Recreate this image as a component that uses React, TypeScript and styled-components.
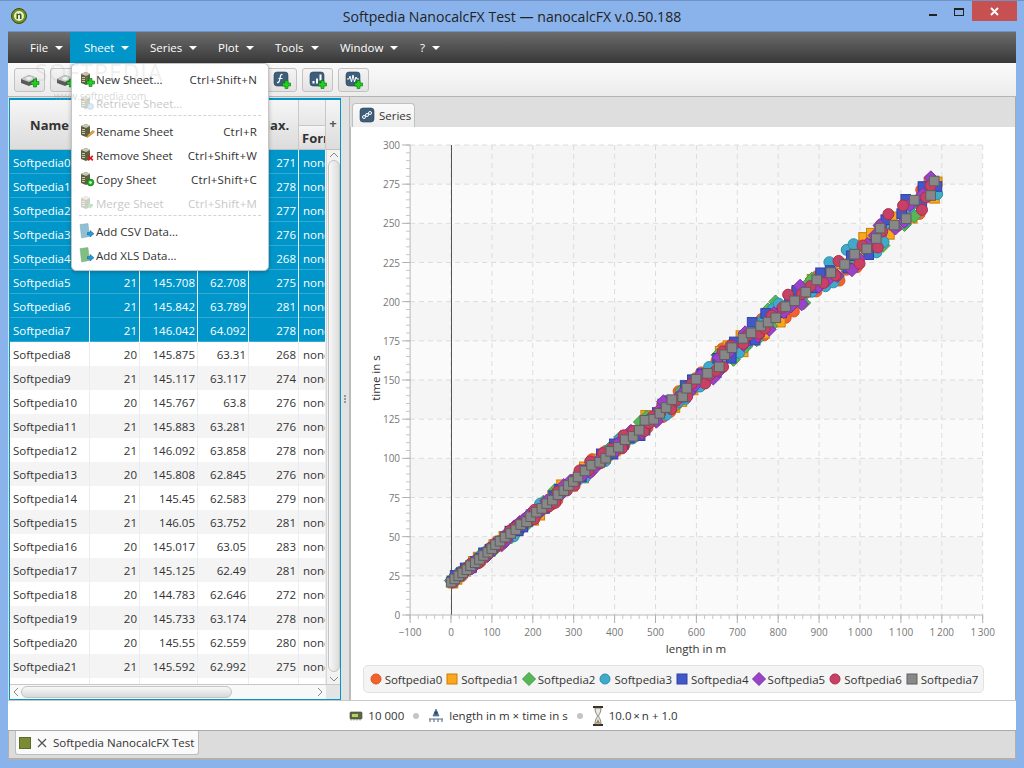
import React from 'react';
import styled, { createGlobalStyle } from 'styled-components';

const GlobalStyle = createGlobalStyle`
  html, body { margin: 0; padding: 0; background: #8ab3ec; }
  body { font-family: "Open Sans", "Liberation Sans", sans-serif; font-size: 11.5px; color: #333; }
  * { box-sizing: border-box; }
`;

const Win = styled.div`
  position: relative;
  width: 1024px;
  height: 768px;
  overflow: hidden;
  display: flex;
  flex-direction: column;
  background: #8ab3ec;
  border-top: 1px solid #6f93c7;
`;

const TitleBar = styled.div`
  position: relative;
  height: 30px;
  flex: none;
  display: flex;
  align-items: center;
  justify-content: center;
  font-size: 14.1px;
  color: #222;
`;

const AppLogo = styled.svg`
  position: absolute;
  left: 11px;
  top: 7px;
`;

const WinButtons = styled.div`
  position: absolute;
  right: 7px;
  top: 0;
  display: flex;
  align-items: flex-start;
`;

const MinBtn = styled.div`
  width: 8px;
  height: 2px;
  background: #222;
  margin: 13px 17px 0 0;
`;

const MaxBtn = styled.div`
  width: 10px;
  height: 8px;
  border: 1px solid #222;
  border-top-width: 2px;
  margin: 7px 8px 0 0;
`;

const CloseBtn = styled.div`
  width: 45px;
  height: 20px;
  background: #c75050;
  color: #fff;
  display: flex;
  align-items: center;
  justify-content: center;
`;

const Frame = styled.div`
  flex: 1;
  margin: 0 8px;
  display: flex;
  flex-direction: column;
  min-height: 0;
`;

const MenuBar = styled.div`
  height: 32px;
  flex: none;
  display: flex;
  background: linear-gradient(#6c6c6c, #383838);
  border-top: 1px solid #6f93c7;
  padding-left: 8px;
`;

const MenuHead = styled.div<{ $w: number; $active?: boolean }>`
  width: ${p => p.$w}px;
  display: flex;
  align-items: center;
  padding-left: 14px;
  gap: 7px;
  font-size: 11.5px;
  color: #fff;
  background: ${p => (p.$active ? '#0096c9' : 'transparent')};
`;

const Caret = styled.span`
  width: 0;
  height: 0;
  border-left: 4px solid transparent;
  border-right: 4px solid transparent;
  border-top: 4px solid #fff;
`;

const ToolBar = styled.div`
  height: 34px;
  flex: none;
  display: flex;
  gap: 5px;
  padding: 5px 0 0 6px;
  background: linear-gradient(#fafafa, #ececec);
  border-bottom: 1px solid #b4b4b4;
`;

const ToolBtn = styled.div`
  width: 31px;
  height: 24px;
  border: 1px solid #c2c2c2;
  border-radius: 3px;
  background: linear-gradient(#f4f4f4, #e2e2e2);
  display: flex;
  align-items: center;
  justify-content: center;
`;

const Main = styled.div`
  flex: 1;
  min-height: 0;
  display: flex;
  background: #dedede;
`;

const TablePane = styled.div`
  width: 332px;
  flex: none;
  margin: 1px 0 0 1px;
  border: 1px solid #0096c9;
  border-top-width: 2px;
  background: #fff;
  display: flex;
  flex-direction: column;
  height: 602px;
  overflow: hidden;
`;

const COLS = '80px 50px 58px 51px 50px 27px 14px';

const HeadRow = styled.div`
  height: 50px;
  flex: none;
  display: grid;
  grid-template-columns: ${COLS};
`;

const HeadCell = styled.div`
  display: flex;
  align-items: center;
  justify-content: center;
  font-weight: 700;
  font-size: 13px;
  color: #333;
  background: linear-gradient(#f6f6f6, #dcdcdc);
  border-right: 1px solid #c8c8c8;
  border-bottom: 1px solid #c0c0c0;
  overflow: hidden;
  white-space: nowrap;
`;

const GroupCell = styled.div`
  display: flex;
  flex-direction: column;
  overflow: hidden;
  border-right: 1px solid #c8c8c8;
  border-bottom: 1px solid #c0c0c0;
`;

const GroupTop = styled.div`
  height: 26px;
  background: linear-gradient(#f4f4f4, #e6e6e6);
  border-bottom: 1px solid #c8c8c8;
`;

const GroupSub = styled.div`
  flex: 1;
  padding-left: 3px;
  display: flex;
  align-items: center;
  font-weight: 700;
  font-size: 13px;
  white-space: nowrap;
  background: linear-gradient(#f6f6f6, #dcdcdc);
`;

const PlusCell = styled(HeadCell)`
  border-right: 0;
  font-size: 13px;
  color: #555;
  padding-bottom: 3px;
`;

const TableMid = styled.div`
  flex: 1;
  min-height: 0;
  display: flex;
`;

const Rows = styled.div`
  width: 316px;
  flex: none;
  overflow: hidden;
`;

const Row = styled.div<{ $selected?: boolean; $alt?: boolean }>`
  height: 24px;
  display: grid;
  grid-template-columns: 80px 50px 58px 51px 50px 27px;
  background: ${p => (p.$selected ? '#0096c9' : p.$alt ? '#f4f4f4' : '#fff')};
  color: ${p => (p.$selected ? '#fff' : '#333')};
  box-shadow: ${p => (p.$selected ? 'inset 0 -1px 0 #33abd4' : 'none')};
`;

const Cell = styled.div<{ $right?: boolean; $selected?: boolean; $clip?: boolean }>`
  display: flex;
  align-items: center;
  justify-content: ${p => (p.$right ? 'flex-end' : 'flex-start')};
  padding: ${p => (p.$clip ? '0 0 0 4px' : '0 2px 0 3px')};
  white-space: nowrap;
  overflow: hidden;
  border-right: 1px solid ${p => (p.$selected ? '#f0f8fb' : '#ececec')};
`;

const VBar = styled.div`
  width: 14px;
  flex: none;
  position: relative;
  display: flex;
  flex-direction: column;
  align-items: center;
  background: #f2f2f2;
  border-left: 1px solid #d8d8d8;
`;

const VThumb = styled.div`
  position: absolute;
  left: 1px;
  right: 0;
  top: 10px;
  height: 512px;
  border-radius: 7px;
  border: 1px solid #c4c4c4;
  background: linear-gradient(90deg, #f8f8f8, #dcdcdc);
`;

const BarArrow = styled.svg<{ $bottom?: boolean }>`
  position: absolute;
  ${p => (p.$bottom ? 'bottom: 2px;' : 'top: 2px;')}
`;

const HBarRow = styled.div`
  height: 15px;
  flex: none;
  display: flex;
  border-top: 1px solid #c8c8c8;
`;

const HBar = styled.div`
  position: relative;
  flex: 1;
  display: flex;
  align-items: center;
  justify-content: space-between;
  padding: 0 3px;
  background: #f8f8f8;
`;

const HThumb = styled.div`
  position: absolute;
  left: 11px;
  width: 211px;
  top: 1px;
  bottom: 1px;
  border-radius: 6px;
  border: 1px solid #c4c4c4;
  background: linear-gradient(#f8f8f8, #d8d8d8);
`;

const Corner = styled.div`
  width: 14px;
  background: #e4e4e4;
`;

const Splitter = styled.div`
  width: 9px;
  flex: none;
  background: #e2e2e2;
  border-right: 1px solid #bbb;
  display: flex;
  flex-direction: column;
  align-items: center;
  justify-content: center;
  gap: 1px;
`;

const GripDot = styled.span`
  width: 2px;
  height: 2px;
  background: #999;
`;

const RightPane = styled.div`
  flex: 1;
  min-width: 0;
  display: flex;
  flex-direction: column;
  border-right: 1px solid #aaa;
`;

const TabStrip = styled.div`
  height: 30px;
  flex: none;
  padding: 6px 0 0 2px;
  background: #dedede;
`;

const SeriesTab = styled.div`
  width: 63px;
  height: 24px;
  display: flex;
  align-items: center;
  gap: 2px;
  padding-left: 6px;
  background: linear-gradient(#fafafa, #eeeeee);
  border: 1px solid #c0c0c0;
  border-bottom: 0;
  border-radius: 4px 4px 0 0;
`;

const ChartPanel = styled.div`
  flex: 1;
  min-height: 0;
  background: #fff;
  display: flex;
  flex-direction: column;
  border-left: 1px solid #bbb;
`;

const ChartSvg = styled.svg`
  display: block;
  flex: none;
`;

const Legend = styled.div`
  margin: 4px 31px 0 12px;
  height: 28px;
  display: flex;
  align-items: center;
  justify-content: center;
  gap: 3px;
  background: #f4f4f4;
  border: 1px solid #e2e2e2;
  border-radius: 5px;
`;

const LegendItem = styled.div`
  display: flex;
  align-items: center;
  gap: 2px;
  color: #333;
`;

const StatusBar = styled.div`
  height: 31px;
  flex: none;
  display: flex;
  align-items: center;
  justify-content: center;
  gap: 5px;
  background: #fff;
  border-top: 1px solid #c8c8c8;
  border-bottom: 1px solid #aaa;
  padding-left: 3px;
  color: #333;
`;

const StatusDot = styled.span`
  width: 6px;
  height: 6px;
  border-radius: 50%;
  background: #c4c4c4;
  margin: 0 4px;
`;

const DocBar = styled.div`
  height: 29px;
  flex: none;
  padding-left: 6px;
  background: #dcdcdc;
  border-bottom: 2px solid #b0b0b0;
  border-left: 1px solid #b0b0b0;
  border-right: 1px solid #b0b0b0;
`;

const DocTab = styled.div`
  width: 184px;
  height: 24px;
  display: flex;
  align-items: center;
  padding-left: 3px;
  background: #fafafa;
  border: 1px solid #bdbdbd;
  border-top: 0;
  border-radius: 0 0 3px 3px;
  color: #333;
  white-space: nowrap;
`;

const DocSwatch = styled.span`
  width: 12px;
  height: 12px;
  background: #7a8a35;
  border: 1px solid #5e6b28;
  margin-right: 6px;
`;

const DocClose = styled.span`
  width: 11px;
  display: flex;
  margin-right: 5px;
`;

const BottomEdge = styled.div`
  height: 8px;
  flex: none;
`;

const Popup = styled.div`
  position: absolute;
  left: 71px;
  top: 62px;
  width: 198px;
  height: 208px;
  padding: 3px 7px 3px 7px;
  background: #fff;
  border: 1px solid #c4c4c4;
  border-radius: 5px;
  box-shadow: 0 1px 4px rgba(0, 0, 0, 0.25);
`;

const PopupItem = styled.div<{ $disabled?: boolean }>`
  height: 24px;
  display: flex;
  align-items: center;
  color: ${p => (p.$disabled ? '#c8c8c8' : '#333')};
  white-space: nowrap;
`;

const PopupIcon = styled.span`
  width: 17px;
  display: flex;
  align-items: center;
`;

const Shortcut = styled.span`
  margin-left: auto;
  padding-right: 4px;
  letter-spacing: 0.2px;
`;

const PopupSep = styled.div`
  height: 4px;
  border-top: 1px dashed #d4d4d4;
`;

const WatermarkBig = styled.div`
  position: absolute;
  left: 35px;
  top: 55px;
  font-size: 23px;
  letter-spacing: 1px;
  color: rgba(170, 170, 170, 0.2);
  pointer-events: none;
`;

const WatermarkSmall = styled.div`
  position: absolute;
  left: 54px;
  top: 88px;
  font-size: 10px;
  color: rgba(150, 150, 150, 0.4);
  pointer-events: none;
`;

// ---- icons ----

const Plus = ({ x, y }: { x: number; y: number }) => (
  <path d={`M${x - 1.5} ${y - 4}h3v2.5h2.5v3h-2.5v2.5h-3v-2.5h-2.5v-3h2.5z`} fill="#1fd01f" stroke="#0c6e0c" strokeWidth="0.6" />
);

const DiskIcon = () => (
  <svg width="20" height="16" viewBox="0 0 20 16">
    <path d="M1 7 9 3l8 3v4l-8 4-8-3z" fill="#5a5a5a" />
    <path d="M1 7 9 3l8 3-8 4z" fill="#c8ccc8" />
    <ellipse cx="9" cy="6.5" rx="3" ry="1.4" fill="#eef2ee" />
    <Plus x={15} y={11} />
  </svg>
);

const BlueTile = ({ children, add = true, size = 18 }: { children: React.ReactNode; add?: boolean; size?: number }) => (
  <svg width={size} height={size} viewBox="0 0 18 18">
    <rect x="1" y="1" width="14" height="14" rx="3" fill="#3e5f7a" stroke="#2a4257" strokeWidth="0.6" />
    {children}
    {add && <Plus x={13.5} y={13.5} />}
  </svg>
);

const SheetIcon = ({ badge, faded }: { badge: string; faded?: boolean }) => (
  <svg width="16" height="16" viewBox="0 0 16 16" opacity={faded ? 0.3 : 1}>
    <path d="M2 3 7 1l4 2v9l-4 2-5-2z" fill="#5d5f42" />
    <path d="M2 3 7 1l4 2-4 2z" fill="#c9c8b4" />
    <path d="M3 6.5h3M3 8.5h3M3 10.5h3" stroke="#d8d6a8" strokeWidth="0.9" />
    {badge === 'add' && <Plus x={11.5} y={11.5} />}
    {badge === 'info' && <circle cx="11.5" cy="11.5" r="3" fill="#7fb7e8" stroke="#3d7ab0" strokeWidth="0.7" />}
    {badge === 'edit' && <path d="M8 14.5l1-3 5-4 1.5 1.5-5 4z" fill="#e8a72c" stroke="#8b6210" strokeWidth="0.5" />}
    {badge === 'remove' && <path d="M8.6 9.4l1.2-1.2 1.7 1.7 1.7-1.7 1.2 1.2-1.7 1.7 1.7 1.7-1.2 1.2-1.7-1.7-1.7 1.7-1.2-1.2 1.7-1.7z" fill="#e01515" />}
    {badge === 'copy' && (
      <>
        <circle cx="11.5" cy="11.5" r="3.4" fill="#20b020" stroke="#0d6d0d" strokeWidth="0.6" />
        <circle cx="11.5" cy="11.5" r="1.3" fill="#e7ffe7" />
      </>
    )}
    {badge === 'merge' && <path d="M9 9h5v2l-2.500 2.500L9 11z" fill="#28b028" />}
  </svg>
);

const DataIcon = ({ color }: { color: string }) => (
  <svg width="16" height="17" viewBox="0 0 16 17">
    <path d="M1 1.500 9 0.500l1.500 13-8 1.500z" fill={color} stroke="#7c9a9c" strokeWidth="0.4" />
    <path d="M8.500 9.500h2.500v-2l4 3.300-4 3.200v-2h-2.500z" fill="#1f9be0" stroke="#0c5c8e" strokeWidth="0.5" />
  </svg>
);

const ArrowUp = () => (
  <BarArrow $bottom={false} width="10" height="6" viewBox="0 0 10 6">
    <path d="M1 5l4-4 4 4" fill="none" stroke="#888" />
  </BarArrow>
);

const ArrowDown = () => (
  <BarArrow $bottom width="10" height="6" viewBox="0 0 10 6">
    <path d="M1 1l4 4 4-4" fill="none" stroke="#888" />
  </BarArrow>
);

const SeriesIcon = () => (
  <BlueTile add={false}>
    <circle cx="5" cy="10" r="1.500" fill="none" stroke="#fff" />
    <circle cx="8" cy="8" r="1.500" fill="none" stroke="#fff" />
    <circle cx="11" cy="6" r="1.500" fill="none" stroke="#fff" />
  </BlueTile>
);

const RamIcon = () => (
  <svg width="14" height="11" viewBox="0 0 14 11">
    <rect x="1" y="2" width="12" height="7" rx="1" fill="#5c6b3c" stroke="#3e3e3e" strokeWidth="0.6" />
    <rect x="3" y="4" width="6" height="3" fill="#b6d06a" />
    <path d="M2 9v1.500M5 9v1.500M8 9v1.500M11 9v1.500" stroke="#888" />
  </svg>
);

const RigIcon = () => (
  <svg width="16" height="18" viewBox="0 0 16 18">
    <path d="M8 2 11 9H5z" fill="#5c87b5" stroke="#2c4c70" strokeWidth="0.6" />
    <circle cx="8" cy="6" r="1.800" fill="#2c4c70" />
    <path d="M1 12h14M2 12v3M6 12v3M10 12v3M14 12v3" stroke="#55708a" strokeWidth="1.100" />
  </svg>
);

const HourglassIcon = () => (
  <svg width="12" height="20" viewBox="0 0 12 20">
    <path d="M1 1h10M1 19h10" stroke="#3a3022" strokeWidth="1.800" />
    <path d="M3 2c0 5 2 6 2.500 8C5 12 3 13 3 18h6c0-5-2-6-2.500-8C7 8 9 7 9 2z" fill="#eceadf" stroke="#555" strokeWidth="0.7" />
    <path d="M4 17h4L6 13z" fill="#a08a55" />
  </svg>
);

// ---- data ----

const tableData: [string, number, string, string, number][] = [
  ['Softpedia0', 21, '145.625', '63.125', 271],
  ['Softpedia1', 20, '145.700', '63.410', 278],
  ['Softpedia2', 21, '145.533', '62.870', 277],
  ['Softpedia3', 21, '145.917', '63.552', 276],
  ['Softpedia4', 20, '145.250', '62.931', 268],
  ['Softpedia5', 21, '145.708', '62.708', 275],
  ['Softpedia6', 21, '145.842', '63.789', 281],
  ['Softpedia7', 21, '146.042', '64.092', 278],
  ['Softpedia8', 20, '145.875', '63.31', 268],
  ['Softpedia9', 21, '145.117', '63.117', 274],
  ['Softpedia10', 20, '145.767', '63.8', 276],
  ['Softpedia11', 21, '145.883', '63.281', 276],
  ['Softpedia12', 21, '146.092', '63.858', 278],
  ['Softpedia13', 20, '145.808', '62.845', 276],
  ['Softpedia14', 21, '145.45', '62.583', 279],
  ['Softpedia15', 21, '146.05', '63.752', 281],
  ['Softpedia16', 20, '145.017', '63.05', 283],
  ['Softpedia17', 21, '145.125', '62.49', 281],
  ['Softpedia18', 20, '144.783', '62.646', 272],
  ['Softpedia19', 20, '145.733', '63.174', 278],
  ['Softpedia20', 20, '145.55', '62.559', 280],
  ['Softpedia21', 21, '145.592', '62.992', 275],
];

type Shape = 'circle' | 'square' | 'diamond';

const series: { name: string; fill: string; stroke: string; shape: Shape }[] = [
  { name: 'Softpedia0', fill: '#f3622d', stroke: '#d9531f', shape: 'circle' },
  { name: 'Softpedia1', fill: '#fba71b', stroke: '#c77f0a', shape: 'square' },
  { name: 'Softpedia2', fill: '#57b757', stroke: '#3f9a3f', shape: 'diamond' },
  { name: 'Softpedia3', fill: '#41a9c9', stroke: '#2e8eac', shape: 'circle' },
  { name: 'Softpedia4', fill: '#4258c9', stroke: '#2f42a6', shape: 'square' },
  { name: 'Softpedia5', fill: '#9a42c8', stroke: '#7e2fa9', shape: 'diamond' },
  { name: 'Softpedia6', fill: '#c84164', stroke: '#a92f4e', shape: 'circle' },
  { name: 'Softpedia7', fill: '#888888', stroke: '#5f5f5f', shape: 'square' },
];

// small seeded generator so the scatter is the same on every load
const makeRandom = (seed: number) => {
  let s = seed;
  return () => {
    s = (s * 1664525 + 1013904223) % 4294967296;
    return s / 4294967296;
  };
};

const scatter = series.map((_, i) => {
  const rnd = makeRandom(i * 7919 + 13);
  const pts: { x: number; y: number }[] = [];
  const gray = i === 7;
  let px = 450 + (gray ? 0 : rnd() * 2);
  const endX = gray ? 942 : 934 + rnd() * 8;
  while (px < endX) {
    const t = (px - 450) / 488;
    const amp = gray ? 0.3 + t * 6 : 2 + t * 10;
    // shared slow wobble, the runs are not quite straight
    const wobble = Math.sin(t * 17) * 3 * t + Math.sin(t * 41 + i) * (0.5 + t * 2);
    const off = (rnd() - 0.5) * 2 * amp + (gray ? wobble * 0.5 : wobble);
    const x = px + off * 0.63;
    const y = 582 - (px - 450) * 0.815 + off * 0.775;
    pts.push({ x, y });
    px += gray ? 3.8 + t * 4 + rnd() * (t * 9) : 4 + t * 3 + rnd() * (1 + t * 6);
  }
  return pts;
});

const Marker = ({ x, y, s }: { x: number; y: number; s: (typeof series)[number] }) => {
  if (s.shape === 'circle') return <circle cx={x} cy={y} r={5.500} fill={s.fill} stroke={s.stroke} />;
  if (s.shape === 'square') return <rect x={x - 4.800} y={y - 4.800} width={9.600} height={9.600} fill={s.fill} stroke={s.stroke} />;
  return <path d={`M${x} ${y - 6.800}L${x + 6.800} ${y}L${x} ${y + 6.800}L${x - 6.800} ${y}z`} fill={s.fill} stroke={s.stroke} />;
};

const LegendMark = ({ s }: { s: (typeof series)[number] }) => (
  <svg width="14" height="14" viewBox="0 0 14 14">
    {s.shape === 'circle' && <circle cx="7" cy="7" r="5" fill={s.fill} stroke={s.stroke} />}
    {s.shape === 'square' && <rect x="2" y="2" width="10" height="10" fill={s.fill} stroke={s.stroke} />}
    {s.shape === 'diamond' && <path d="M7 0.500 13.500 7 7 13.500 0.500 7z" fill={s.fill} stroke={s.stroke} />}
  </svg>
);

const X0 = 450;
const Y0 = 615;
const PX = 0.409;
const PY = 470 / 300;
const fmtX = (v: number) => {
  if (v < 0) return '\u2212100';
  if (v >= 1000) return `1\u2009${String(v - 1000).padStart(3, '0')}`;
  return String(v);
};

const Chart = () => {
  const xs: number[] = [];
  for (let v = -100; v <= 1300; v += 100) xs.push(v);
  const ys: number[] = [];
  for (let v = 0; v <= 300; v += 25) ys.push(v);
  const minorX: number[] = [];
  for (let v = -100; v <= 1300; v += 20) minorX.push(v);
  const minorY: number[] = [];
  for (let v = 0; v <= 300; v += 5) minorY.push(v);
  const left = X0 - 100 * PX;
  const right = X0 + 1300 * PX;
  const top = Y0 - 300 * PY;
  return (
    <ChartSvg width="666" height="534" viewBox="350 127 666 534">
      {ys.slice(0, -1).map((v, i) => (
        <rect
          key={v}
          x={left}
          y={Y0 - (v + 25) * PY}
          width={right - left}
          height={25 * PY}
          fill={i % 2 === 0 ? '#fafafa' : '#f5f5f5'}
        />
      ))}
      {xs.slice(1).map(v => (
        <line key={v} x1={X0 + v * PX} x2={X0 + v * PX} y1={top} y2={Y0} stroke="#dcdcdc" strokeDasharray="5 4" />
      ))}
      {ys.slice(1).map(v => (
        <line key={v} x1={left} x2={right} y1={Y0 - v * PY} y2={Y0 - v * PY} stroke="#dcdcdc" strokeDasharray="5 4" />
      ))}
      <line x1={X0 + 0.5} x2={X0 + 0.5} y1={top} y2={Y0} stroke="#555" />
      <line x1={left} x2={left} y1={top} y2={Y0} stroke="#b8b8b8" />
      <line x1={left} x2={right} y1={Y0} y2={Y0} stroke="#b8b8b8" />
      {minorX.map(v => (
        <line key={v} x1={X0 + v * PX} x2={X0 + v * PX} y1={Y0} y2={Y0 + 4} stroke="#c4c4c4" />
      ))}
      {minorY.map(v => (
        <line key={v} x1={left - 4} x2={left} y1={Y0 - v * PY} y2={Y0 - v * PY} stroke="#c4c4c4" />
      ))}
      {xs.map(v => (
        <line key={v} x1={X0 + v * PX} x2={X0 + v * PX} y1={Y0} y2={Y0 + 8} stroke="#b0b0b0" />
      ))}
      {ys.map(v => (
        <line key={v} x1={left - 8} x2={left} y1={Y0 - v * PY} y2={Y0 - v * PY} stroke="#b0b0b0" />
      ))}
      <g fontFamily='"Open Sans", "Liberation Sans", sans-serif' fontSize="10" fill="#777">
        {xs.map(v => (
          <text key={v} x={X0 + v * PX} y={Y0 + 21} textAnchor="middle">{fmtX(v)}</text>
        ))}
        {ys.map(v => (
          <text key={v} x={left - 10} y={Y0 - v * PY + 4} textAnchor="end">{v}</text>
        ))}
      </g>
      <g fontFamily='"Open Sans", "Liberation Sans", sans-serif' fontSize="11.500" fill="#333">
        <text x="695" y="653" textAnchor="middle">length in m</text>
        <text transform="translate(379 378) rotate(-90)" textAnchor="middle">time in s</text>
      </g>
      {series.map((s, i) => (
        <g key={s.name}>
          {scatter[i].map((p, j) => (
            <Marker key={j} x={p.x} y={p.y} s={s} />
          ))}
        </g>
      ))}
    </ChartSvg>
  );
};

const menuHeads: [string, number, boolean?][] = [
  ['File', 54],
  ['Sheet', 66, true],
  ['Series', 68],
  ['Plot', 57],
  ['Tools', 65],
  ['Window', 80],
  ['?', 44],
];

const App: React.FC = () => (
  <>
    <GlobalStyle />
    <Win>
      <TitleBar>
        <AppLogo width="16" height="16" viewBox="0 0 16 16">
          <circle cx="8" cy="8" r="7.500" fill="#6f8f1e" stroke="#39500c" />
          <circle cx="8" cy="8" r="5" fill="#e7edcf" />
          <path d="M5.500 11V5.500h1.200l.3.800c1-1.300 3.500-1.200 3.500 1V11H9V7.500c0-1.200-1.800-1-2 0V11z" fill="#3d5510" />
        </AppLogo>
        Softpedia NanocalcFX Test — nanocalcFX v.0.50.188
        <WinButtons>
          <MinBtn />
          <MaxBtn />
          <CloseBtn>
            <svg width="9" height="9" viewBox="0 0 9 9">
              <path d="M1 1l7 7M8 1l-7 7" stroke="#fff" strokeWidth="2" />
            </svg>
          </CloseBtn>
        </WinButtons>
      </TitleBar>
      <Frame>
        <MenuBar>
          {menuHeads.map(([label, w, active]) => (
            <MenuHead key={label} $w={w} $active={active}>
              {label}
              <Caret />
            </MenuHead>
          ))}
        </MenuBar>
        <ToolBar>
          <ToolBtn><DiskIcon /></ToolBtn>
          <ToolBtn><DiskIcon /></ToolBtn>
          <ToolBtn><DiskIcon /></ToolBtn>
          <ToolBtn><DiskIcon /></ToolBtn>
          <ToolBtn><DiskIcon /></ToolBtn>
          <ToolBtn><DiskIcon /></ToolBtn>
          <ToolBtn><DiskIcon /></ToolBtn>
          <ToolBtn>
            <BlueTile>
              <path d="M9.500 3.500C7.500 3 7.500 5 7 7.500S6 12 4 11.500M5.500 7.500H9.500" fill="none" stroke="#fff" strokeWidth="1.200" />
            </BlueTile>
          </ToolBtn>
          <ToolBtn>
            <BlueTile>
              <path d="M3.500 10h2v2.500h-2zM7 7.500h2v5H7zM10.500 3.500h2v6h-2z" fill="#fff" />
            </BlueTile>
          </ToolBtn>
          <ToolBtn>
            <BlueTile>
              <path d="M2 8h2l1-3 1.500 6L8 4l1.500 7L11 6l1 2h2" fill="none" stroke="#fff" strokeWidth="1" />
            </BlueTile>
          </ToolBtn>
        </ToolBar>
        <Main>
          <TablePane>
            <HeadRow>
              <HeadCell>Name</HeadCell>
              <HeadCell>n</HeadCell>
              <HeadCell>Mean</HeadCell>
              <HeadCell>Min.</HeadCell>
              <HeadCell>Max.</HeadCell>
              <GroupCell>
                <GroupTop />
                <GroupSub>Form</GroupSub>
              </GroupCell>
              <PlusCell>+</PlusCell>
            </HeadRow>
            <TableMid>
              <Rows>
                {tableData.map((r, i) => {
                  const sel = i < 8;
                  return (
                    <Row key={r[0]} $selected={sel} $alt={i % 2 === 1}>
                      <Cell $selected={sel}>{r[0]}</Cell>
                      <Cell $selected={sel} $right>{r[1]}</Cell>
                      <Cell $selected={sel} $right>{r[2]}</Cell>
                      <Cell $selected={sel} $right>{r[3]}</Cell>
                      <Cell $selected={sel} $right>{r[4]}</Cell>
                      <Cell $selected={sel} $clip>none</Cell>
                    </Row>
                  );
                })}
                <Row>
                  <Cell /><Cell /><Cell /><Cell /><Cell /><Cell />
                </Row>
              </Rows>
              <VBar>
                <ArrowUp />
                <VThumb />
                <ArrowDown />
              </VBar>
            </TableMid>
            <HBarRow>
              <HBar>
                <svg width="6" height="10" viewBox="0 0 6 10"><path d="M5 1 1 5l4 4" fill="none" stroke="#888" /></svg>
                <HThumb />
                <svg width="6" height="10" viewBox="0 0 6 10"><path d="M1 1l4 4-4 4" fill="none" stroke="#888" /></svg>
              </HBar>
              <Corner />
            </HBarRow>
          </TablePane>
          <Splitter>
            <GripDot />
            <GripDot />
            <GripDot />
          </Splitter>
          <RightPane>
            <TabStrip>
              <SeriesTab>
                <SeriesIcon />
                Series
              </SeriesTab>
            </TabStrip>
            <ChartPanel>
              <Chart />
              <Legend>
                {series.map(s => (
                  <LegendItem key={s.name}>
                    <LegendMark s={s} />
                    {s.name}
                  </LegendItem>
                ))}
              </Legend>
            </ChartPanel>
          </RightPane>
        </Main>
        <StatusBar>
          <RamIcon />
          10 000
          <StatusDot />
          <RigIcon />
          length in m × time in s
          <StatusDot />
          <HourglassIcon />
          {'10.0\u2009×\u2009n + 1.0'}
        </StatusBar>
        <DocBar>
          <DocTab>
            <DocSwatch />
            <DocClose>
              <svg width="10" height="10" viewBox="0 0 10 10">
                <path d="M1 1l8 8M9 1l-8 8" stroke="#555" strokeWidth="1.300" />
              </svg>
            </DocClose>
            Softpedia NanocalcFX Test
          </DocTab>
        </DocBar>
      </Frame>
      <BottomEdge />
      <Popup>
        <PopupItem><PopupIcon><SheetIcon badge="add" /></PopupIcon>New Sheet...<Shortcut>Ctrl+Shift+N</Shortcut></PopupItem>
        <PopupItem $disabled><PopupIcon><SheetIcon badge="info" faded /></PopupIcon>Retrieve Sheet...</PopupItem>
        <PopupSep />
        <PopupItem><PopupIcon><SheetIcon badge="edit" /></PopupIcon>Rename Sheet<Shortcut>Ctrl+R</Shortcut></PopupItem>
        <PopupItem><PopupIcon><SheetIcon badge="remove" /></PopupIcon>Remove Sheet<Shortcut>Ctrl+Shift+W</Shortcut></PopupItem>
        <PopupItem><PopupIcon><SheetIcon badge="copy" /></PopupIcon>Copy Sheet<Shortcut>Ctrl+Shift+C</Shortcut></PopupItem>
        <PopupItem $disabled><PopupIcon><SheetIcon badge="merge" faded /></PopupIcon>Merge Sheet<Shortcut>Ctrl+Shift+M</Shortcut></PopupItem>
        <PopupSep />
        <PopupItem><PopupIcon><DataIcon color="#8fc0d8" /></PopupIcon>Add CSV Data...</PopupItem>
        <PopupItem><PopupIcon><DataIcon color="#7fc07f" /></PopupIcon>Add XLS Data...</PopupItem>
      </Popup>
      <WatermarkBig>SOFTPEDIA</WatermarkBig>
      <WatermarkSmall>www.softpedia.com</WatermarkSmall>
    </Win>
  </>
);

export default App;
